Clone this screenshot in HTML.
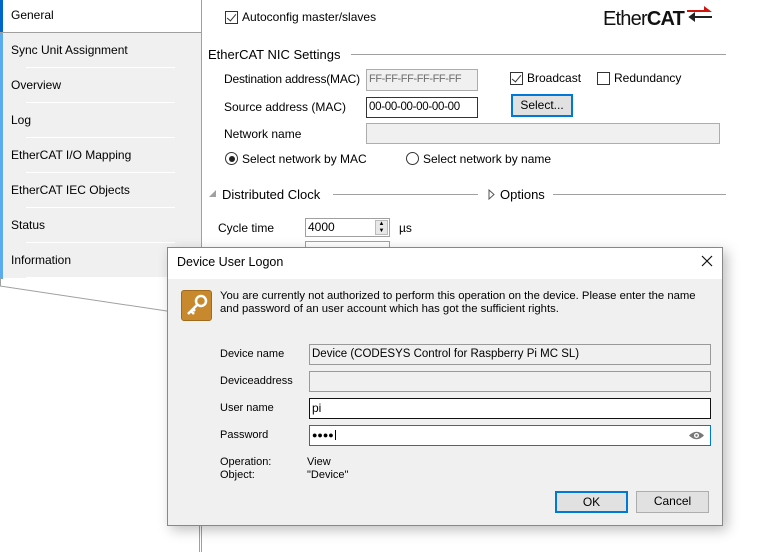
<!DOCTYPE html><html><head><style>
*{margin:0;padding:0;box-sizing:border-box}
body{width:764px;height:552px;background:#fff;position:relative;overflow:hidden;font-family:"Liberation Sans",sans-serif;font-size:12px;color:#000}
.a{position:absolute;white-space:nowrap}
.cb{position:absolute;width:13px;height:13px;border:1px solid #333;background:#fff}
.cb.k::after{content:"";position:absolute;left:3px;top:0px;width:4px;height:8px;border:solid #333;border-width:0 1.5px 1.5px 0;transform:rotate(40deg)}
.rd{position:absolute;width:13px;height:13px;border:1px solid #333;border-radius:50%;background:#fff}
.rd.k::after{content:"";position:absolute;left:2.5px;top:2.5px;width:6px;height:6px;border-radius:50%;background:#222}
.in{position:absolute;border:1px solid #7a7a7a;background:#fff;padding:0 2px;font-size:12px;white-space:nowrap;overflow:hidden;line-height:19px}
.g{background:#f0f0f0;border-color:#adadad;color:#6d6d6d}
.side{position:absolute;left:0;top:32px;width:202px;height:246px;background:#f0f0f0;border-right:1px solid #a0a0a0;border-top:1px solid #a0a0a0}
.it{position:absolute;left:0;width:201px;height:35px;border-left:3px solid #5aabf0}
.it span{position:absolute;left:8px;top:10px}
.sep{position:absolute;left:26px;width:149px;height:1px;background:#fff}
.hl{position:absolute;height:1px;background:#a0a0a0}
.btn{position:absolute;background:#e1e1e1;border:1px solid #adadad;text-align:center;line-height:19px}
</style></head><body>
<div class="a" style="left:201px;top:0;width:1px;height:552px;background:#a0a0a0"></div>
<div class="a" style="left:199px;top:520px;width:1px;height:32px;background:#a0a0a0"></div>
<div class="a" style="left:0;top:0;width:3px;height:32px;background:#0066cc"></div>
<div class="a" style="left:11px;top:8px">General</div>
<div class="side">
<div class="it" style="top:0"><span>Sync Unit Assignment</span></div>
<div class="it" style="top:35px"><span>Overview</span></div>
<div class="it" style="top:70px"><span>Log</span></div>
<div class="it" style="top:105px"><span>EtherCAT I/O Mapping</span></div>
<div class="it" style="top:140px"><span>EtherCAT IEC Objects</span></div>
<div class="it" style="top:175px"><span>Status</span></div>
<div class="it" style="top:210px;height:36px"><span>Information</span></div>
<div class="sep" style="top:34px"></div><div class="sep" style="top:69px"></div><div class="sep" style="top:104px"></div><div class="sep" style="top:139px"></div><div class="sep" style="top:174px"></div><div class="sep" style="top:209px"></div><div class="sep" style="top:244px"></div>
</div>
<div class="a" style="left:0;top:278px;width:1px;height:8px;background:#a0a0a0"></div>
<svg class="a" style="left:0;top:280px" width="200" height="40"><line x1="0" y1="6" x2="200" y2="36" stroke="#a0a0a0"/></svg>
<div class="a" style="left:603px;top:8px;font-size:20px;letter-spacing:-0.8px;color:#111">Ether<b>CAT</b></div>
<svg class="a" style="left:684px;top:5px" width="28" height="18"><path d="M3 5h17v-4l8 6h-25z" fill="#d2150c"/><path d="M6 12h22M6 12l4-3v6z" stroke="#222" stroke-width="2" fill="#222"/></svg>
<div class="cb k" style="left:225px;top:11px"></div><div class="a" style="left:242px;top:10px">Autoconfig master/slaves</div>
<div class="a" style="left:208px;top:47px;font-size:13px">EtherCAT NIC Settings</div>
<div class="hl" style="left:351px;top:54px;width:375px"></div>
<div class="a" style="left:224px;top:72px;letter-spacing:-0.2px">Destination address(MAC)</div>
<div class="in g" style="left:366px;top:69px;width:112px;height:22px;font-size:11px;letter-spacing:-0.4px">FF-FF-FF-FF-FF-FF</div>
<div class="cb k" style="left:510px;top:72px"></div><div class="a" style="left:527px;top:71px">Broadcast</div>
<div class="cb" style="left:597px;top:72px"></div><div class="a" style="left:614px;top:71px">Redundancy</div>
<div class="a" style="left:224px;top:100px">Source address (MAC)</div>
<div class="in" style="left:366px;top:97px;width:112px;height:21px;border-color:#333;font-size:11.5px;letter-spacing:-0.3px">00-00-00-00-00-00</div>
<div class="btn" style="left:511px;top:94px;width:62px;height:23px;border:2px solid #0078d7">Select...</div>
<div class="a" style="left:224px;top:127px">Network name</div>
<div class="in g" style="left:366px;top:123px;width:354px;height:21px"></div>
<div class="rd k" style="left:225px;top:152px"></div><div class="a" style="left:242px;top:152px">Select network by MAC</div>
<div class="rd" style="left:406px;top:152px"></div><div class="a" style="left:423px;top:152px">Select network by name</div>
<svg class="a" style="left:208px;top:189px" width="10" height="10"><path d="M8 1v7h-7z" fill="#a0a0a0"/></svg>
<div class="a" style="left:222px;top:187px;font-size:13px">Distributed Clock</div>
<div class="hl" style="left:333px;top:194px;width:145px"></div>
<svg class="a" style="left:488px;top:189px" width="8" height="11"><path d="M1 1l5 4.5l-5 4.5z" fill="none" stroke="#555"/></svg>
<div class="a" style="left:500px;top:187px;font-size:13px">Options</div>
<div class="hl" style="left:553px;top:194px;width:173px"></div>
<div class="a" style="left:218px;top:221px">Cycle time</div>
<div class="in" style="left:305px;top:218px;width:85px;height:19px;line-height:17px;border-color:#a0a0a0">4000</div>
<div class="a" style="left:375px;top:220px;width:13px;height:15px;background:#e8e8e8;border:1px solid #bbb;font-size:6px;line-height:7px;text-align:center">▲<br>▼</div>
<div class="a" style="left:399px;top:221px">µs</div>
<div class="in" style="left:305px;top:241px;width:85px;height:10px;border-color:#a0a0a0"></div>
<div class="a" style="left:167px;top:247px;width:556px;height:279px;background:#f0f0f0;border:1px solid #888;box-shadow:4px 4px 12px rgba(0,0,0,0.25)">
<div style="position:absolute;left:0;top:0;width:554px;height:31px;background:#fff"></div>
<div class="a" style="left:9px;top:7px;font-size:12.5px">Device User Logon</div>
<svg class="a" style="left:533px;top:7px" width="12" height="12"><path d="M1 1l10 10M11 1l-10 10" stroke="#111" stroke-width="1.2"/></svg>
<div class="a" style="left:13px;top:42px;width:31px;height:31px;background:#c8892e;border-radius:3px;border:1px solid #a06a1d"></div>
<svg class="a" style="left:15px;top:44px" width="28" height="28"><circle cx="18" cy="9" r="5" fill="none" stroke="#fff" stroke-width="2.5"/><path d="M14 13l-9 9M8 19l3 3M10 17l2 2" stroke="#fff" stroke-width="2.5"/></svg>
<div class="a" style="left:52px;top:42px;font-size:11.3px;line-height:13px">You are currently not authorized to perform this operation on the device. Please enter the name<br>and password of an user account which has got the sufficient rights.</div>
<div class="a" style="left:52px;top:100px;font-size:11px">Device name</div>
<div class="in g" style="left:141px;top:96px;width:402px;height:21px;color:#000;border-color:#999;font-size:11.5px">Device (CODESYS Control for Raspberry Pi MC SL)</div>
<div class="a" style="left:52px;top:127px;font-size:11px">Deviceaddress</div>
<div class="in g" style="left:141px;top:123px;width:402px;height:21px;border-color:#999"></div>
<div class="a" style="left:52px;top:154px;font-size:11px">User name</div>
<div class="in" style="left:141px;top:150px;width:402px;height:21px;border-color:#111">pi</div>
<div class="a" style="left:52px;top:181px;font-size:11px">Password</div>
<div class="in" style="left:141px;top:177px;width:402px;height:21px;border-color:#0078d7;font-size:9px">●●●●<span style="border-left:1px solid #000;margin-left:1px"> </span></div>
<svg class="a" style="left:520px;top:182px" width="17" height="11"><path d="M1 5.5Q8.5 -2 16 5.5Q8.5 13 1 5.5z" fill="#777"/><circle cx="8.5" cy="5.5" r="2.5" fill="#fff"/><circle cx="8.5" cy="5.5" r="1.2" fill="#777"/></svg>
<div class="a" style="left:52px;top:208px;font-size:11px;line-height:13px">Operation:<br>Object:</div>
<div class="a" style="left:139px;top:208px;font-size:11px;line-height:13px">View<br>"Device"</div>
<div class="btn" style="left:387px;top:243px;width:73px;height:22px;border:2px solid #0078d7">OK</div>
<div class="btn" style="left:468px;top:243px;width:73px;height:22px">Cancel</div>
</div>
</body></html>
